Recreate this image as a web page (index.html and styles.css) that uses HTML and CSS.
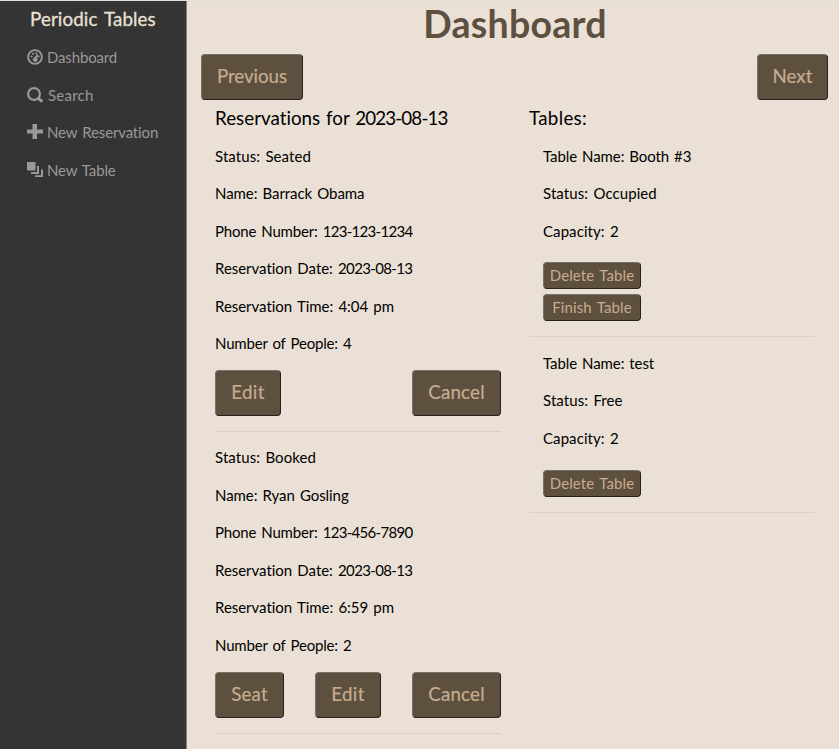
FILE: index.html
```html
<!DOCTYPE html>
<html lang="en">
<head>
<meta charset="utf-8">
<title>Periodic Tables</title>
<link rel="stylesheet" href="styles.css">
</head>
<body>
<div class="app">
  <nav class="sidebar">
    <div class="brand">Periodic Tables</div>
    <ul class="menu">
      <li><svg viewBox="0 0 16 16"><circle cx="8" cy="8" r="6.9" fill="none" stroke="currentColor" stroke-width="1.9"/><circle cx="4.6" cy="7.4" r="1"/><circle cx="6" cy="4.8" r="1"/><circle cx="9" cy="4.3" r="1"/><circle cx="11.6" cy="7.4" r="1"/><path d="M10.3 4.7l1 .5-1.2 4.100a2.300 2.300 0 1 1-2.700-.9z"/></svg><span>Dashboard</span></li>
      <li class="search"><svg viewBox="0 0 16 16"><circle cx="7" cy="7" r="5.900" fill="none" stroke="currentColor" stroke-width="2.200"/><path d="M10 12l2-2 3.700 3q.6.7 0 1.400l-.8.8q-.7.5-1.400 0z"/></svg><span>Search</span></li>
      <li><svg viewBox="0 0 16 16"><path d="M5.500 0h4.500v5.500h6v4h-6V15H5.500V9.500H0v-4h5.500z"/></svg><span>New Reservation</span></li>
      <li><svg viewBox="0 0 16 16"><path d="M0 0h8.500v8.500H0zM10 4h2v8H4v-2h6zM14 7.500h2V15H8v-1.700h6z"/></svg><span>New Table</span></li>
    </ul>
  </nav>
  <main class="main">
    <h1>Dashboard</h1>
    <div class="pager"><button class="btn previous">Previous</button><button class="btn next">Next</button></div>
    <div class="columns">
      <section class="reservations">
        <h2>Reservations for <span class="num">2023-08-13</span></h2>
        <article>
          <p>Status: Seated</p>
          <p class="guest">Name: Barrack Obama</p>
          <p class="phone">Phone Number: <span class="num">123-123-1234</span></p>
          <p class="long">Reservation Date: <span class="num">2023-08-13</span></p>
          <p class="long">Reservation Time: 4:04 pm</p>
          <p class="phone">Number of People: 4</p>
          <div class="actions"><button class="btn edit">Edit</button><button class="btn cancel">Cancel</button></div>
        </article>
        <article>
          <p>Status: Booked</p>
          <p class="guest">Name: Ryan Gosling</p>
          <p class="phone">Phone Number: <span class="num">123-456-7890</span></p>
          <p class="long">Reservation Date: <span class="num">2023-08-13</span></p>
          <p class="long">Reservation Time: 6:59 pm</p>
          <p class="phone">Number of People: 2</p>
          <div class="actions"><button class="btn seat">Seat</button><button class="btn edit">Edit</button><button class="btn cancel">Cancel</button></div>
        </article>
      </section>
      <section class="tables">
        <h2>Tables:</h2>
        <article>
          <p class="name">Table Name: Booth #3</p>
          <p>Status: Occupied</p>
          <p>Capacity: 2</p>
          <div class="table-actions"><button class="small">Delete Table</button><button class="small">Finish Table</button></div>
        </article>
        <article>
          <p class="name">Table Name: test</p>
          <p>Status: Free</p>
          <p>Capacity: 2</p>
          <div class="table-actions"><button class="small">Delete Table</button></div>
        </article>
      </section>
    </div>
  </main>
</div>
</body>
</html>
```
FILE: styles.css
```css
* { box-sizing: border-box; }
body {
  margin: 0;
  font: 15px/22.5px "Trebuchet MS", Lato, sans-serif;
  font-variant-ligatures: none;
  color: #000;
  background: #eae0d5;
  overflow: hidden;
}
.app { display: flex; height: 749px; border-top: 1px solid #dedfdd; white-space: nowrap; }
.sidebar { width: 187px; flex: none; background: #343434; border-right: 1px solid #858079; }
.brand { padding: 6px 0 0 30px; font-size: 18.75px; line-height: 24px; color: #eae0d5; word-spacing: 2px; letter-spacing: .12px; -webkit-text-stroke: .3px; }
.menu { list-style: none; margin: 15.500px 0 0; padding: 0 0 0 27px; color: #999; }
.menu li { display: flex; align-items: center; gap: 4px; height: 22.5px; margin-bottom: 15px; letter-spacing: -.15px; word-spacing: 1.5px; }
.menu li span { margin-top: -1px; }
.menu .search { gap: 5px; letter-spacing: .25px; }
.menu .search span { margin-top: 0; }
.menu svg { width: 16px; height: 16px; fill: currentColor; margin-top: -1px; }
.main { flex: 1; padding: 0 11px 0 14px; }
h1 { margin: 0; text-align: center; font-size: 37.5px; line-height: 45px; font-weight: 700; color: #5e503f; padding-left: 1px; letter-spacing: .25px; }
.pager { display: flex; justify-content: space-between; margin-top: 8px; }
button { font-family: inherit; background: #5e503f; color: #c6ac8f; border: 1.5px solid; border-color: #77736c #25221e #25221e #77736c; padding: 0; }
.btn { height: 46px; border-radius: 4px; font-size: 18.75px; line-height: 28px; padding-bottom: 2px; -webkit-text-stroke: .2px; }
.previous { width: 102px; letter-spacing: -.05px; }
.next { width: 71px; }
.edit { width: 66px; letter-spacing: .3px; }
.cancel { width: 89px; letter-spacing: .2px; }
.seat { width: 69px; letter-spacing: .2px; }
.columns { display: flex; gap: 28px; padding: 0 13px 0 14px; }
.columns section { width: 286px; }
h2 { margin: 6px 0 15px; font-size: 18.75px; line-height: 23.500px; font-weight: 400; letter-spacing: .02px; word-spacing: 1px; }
.tables h2 { letter-spacing: .3px; }
p { margin: 0 0 15px; word-spacing: 1.4px; letter-spacing: .08px; }
.guest { letter-spacing: -.07px; }
.phone { letter-spacing: -.18px; }
.long { letter-spacing: -.03px; }
.name { word-spacing: 1px; letter-spacing: -.05px; }
.num { letter-spacing: -.7px; }
.long .num { letter-spacing: -.64px; }
h2 .num { letter-spacing: -.87px; }
article { border-bottom: 1px solid #d9cfc5; margin-bottom: 14.5px; }
article + article > div { padding-top: 1px; }
.actions { display: flex; justify-content: space-between; padding-bottom: 15px; }
.tables article { padding-left: 14px; }
.table-actions { display: flex; flex-direction: column; gap: 5px; padding: 5px 0 15px; }
.tables article + article > div { padding-top: 5.8px; }
.small { width: 98px; height: 27px; border-radius: 4px; font-size: 15px; line-height: 22px; word-spacing: 1.5px; letter-spacing: .1px; padding-bottom: 1px; }
```
